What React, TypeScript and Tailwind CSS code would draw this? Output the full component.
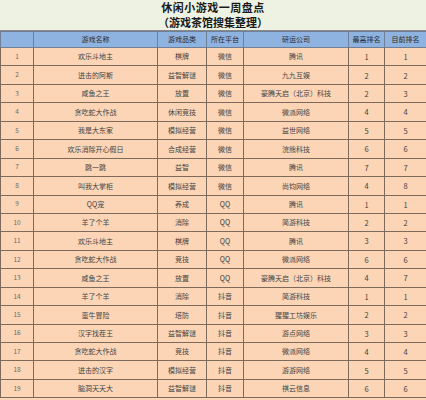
import React from "react";

type Row = [string, string, string, string, string, string, string];

const rows: Row[] = [
  ["1", "欢乐斗地主", "棋牌", "微信", "腾讯", "1", "1"],
  ["2", "进击的阿斯", "益智解谜", "微信", "九九互娱", "2", "2"],
  ["3", "咸鱼之王", "放置", "微信", "豪腾天启（北京）科技", "2", "3"],
  ["4", "贪吃蛇大作战", "休闲竞技", "微信", "微派网络", "4", "4"],
  ["5", "我是大东家", "模拟经营", "微信", "益世网络", "5", "5"],
  ["6", "欢乐消除开心假日", "合成经营", "微信", "浣熊科技", "6", "6"],
  ["7", "跳一跳", "益智", "微信", "腾讯", "7", "7"],
  ["8", "叫我大掌柜", "模拟经营", "微信", "尚钧网络", "4", "8"],
  ["9", "QQ宠", "养成", "QQ", "腾讯", "1", "1"],
  ["10", "羊了个羊", "消除", "QQ", "简游科技", "2", "2"],
  ["11", "欢乐斗地主", "棋牌", "QQ", "腾讯", "3", "3"],
  ["12", "贪吃蛇大作战", "竞技", "QQ", "微派网络", "6", "6"],
  ["13", "咸鱼之王", "放置", "QQ", "豪腾天启（北京）科技", "4", "7"],
  ["14", "羊了个羊", "消除", "抖音", "简游科技", "1", "1"],
  ["15", "蛮牛冒险", "塔防", "抖音", "猩猩工坊娱乐", "2", "2"],
  ["16", "汉字找茬王", "益智解谜", "抖音", "游点网络", "3", "3"],
  ["17", "贪吃蛇大作战", "竞技", "抖音", "微派网络", "4", "4"],
  ["18", "进击的汉字", "模拟经营", "抖音", "游游网络", "5", "5"],
  ["19", "脑洞天天大", "益智解谜", "抖音", "祺云信息", "6", "6"],
];

const headers = ["", "游戏名称", "游戏品类", "所在平台", "研运公司", "最高排名", "目前排名"];

export default function App() {
  return (
    <div
      className="w-[426px] h-[400px] overflow-hidden bg-[#fbd5b5]"
      style={{ fontFamily: '"Noto Sans CJK SC", "Noto Sans", sans-serif' }}
    >
      <div className="h-[31px] bg-[#eef2e3] border-b border-[#8a8a8a] flex flex-col items-center justify-center leading-[15px]">
        <div className="text-[11px] font-bold text-[#1a1a1a] tracking-[0.5px]">休闲小游戏一周盘点</div>
        <div className="text-[11px] font-bold text-[#1a1a1a]">（游戏茶馆搜集整理）</div>
      </div>
      <table className="table-fixed border-collapse w-[426px] text-[7px] text-[#444]">
        <colgroup>
          <col className="w-[33px]" />
          <col className="w-[124px]" />
          <col className="w-[49px]" />
          <col className="w-[37px]" />
          <col className="w-[105px]" />
          <col className="w-[36px]" />
          <col className="w-[42px]" />
        </colgroup>
        <thead>
          <tr className="h-[16px] bg-[#8fb3e0]">
            {headers.map((h, i) => (
              <th
                key={i}
                className="border border-[#6f7f95] font-normal text-center p-0 text-[7px] text-[#2a2a2a]"
              >
                {h}
              </th>
            ))}
          </tr>
        </thead>
        <tbody>
          {rows.map((r, ri) => {
            const thick = ri === 6 || ri === 16;
            return (
              <tr
                key={ri}
                className={
                  "h-[18.45px] bg-[#fbd5b5] " +
                  (thick ? "border-b-[1.5px] border-b-[#3a2e25]" : "")
                }
              >
                {r.map((c, ci) => (
                  <td
                    key={ci}
                    className={
                      "border border-[#7d6a5b] text-center p-0 whitespace-nowrap " +
                      (ci === 0 ? "text-[#6a6a6a] text-[6.5px]" : "") +
                      (ci >= 5 ? " text-[7.5px]" : "")
                    }
                  >
                    {c}
                  </td>
                ))}
              </tr>
            );
          })}
        </tbody>
      </table>
    </div>
  );
}
